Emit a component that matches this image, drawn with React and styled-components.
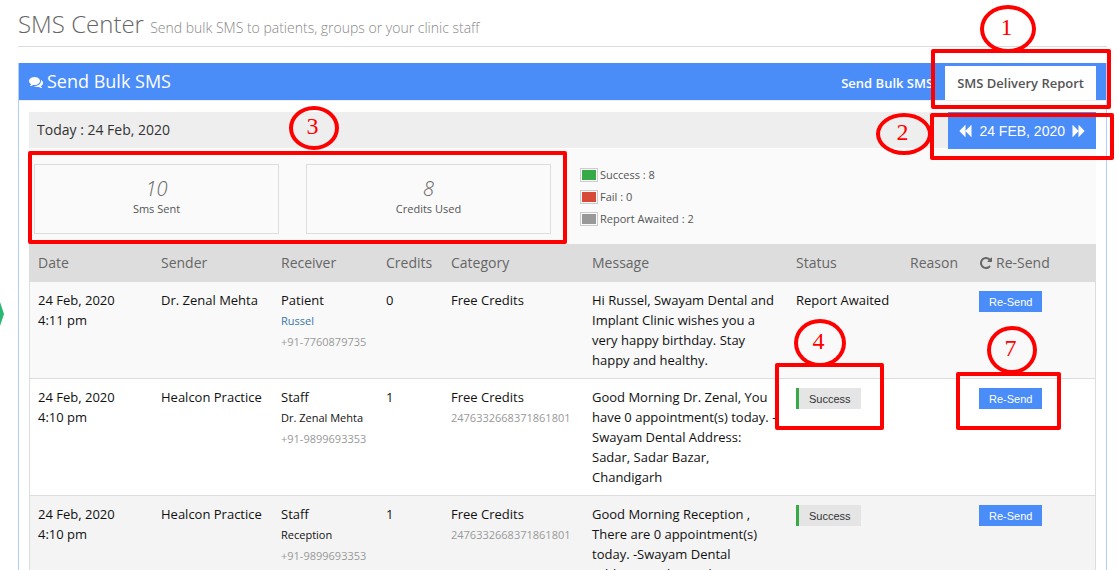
import React from "react";
import styled, { createGlobalStyle } from "styled-components";

const stats = [
  { value: 10, label: "Sms Sent" },
  { value: 8, label: "Credits Used" },
];

const legends = [
  { label: "Success", count: 8, color: "#35aa47" },
  { label: "Fail", count: 0, color: "#d84a38" },
  { label: "Report Awaited", count: 2, color: "#999999" },
];

const columnWidths = [123, 120, 105, 65, 141, 204, 114, 69];

const reports = [
  {
    id: 1,
    date: "24 Feb, 2020",
    time: "4:11 pm",
    sender: "Dr. Zenal Mehta",
    type: "Patient",
    receiver: "Russel",
    link: true,
    phone: "+91-7760879735",
    credits: 0,
    message:
      "Hi Russel, Swayam Dental and Implant Clinic wishes you a very happy birthday. Stay happy and healthy.",
    background: "#f9f9f9",
  },
  {
    id: 2,
    date: "24 Feb, 2020",
    time: "4:10 pm",
    sender: "Healcon Practice",
    type: "Staff",
    receiver: "Dr. Zenal Mehta",
    phone: "+91-9899693353",
    credits: 1,
    reference: "2476332668371861801",
    message:
      "Good Morning Dr. Zenal, You have 0 appointment(s) today. -Swayam Dental Address: Sadar, Sadar Bazar, Chandigarh",
    success: true,
    background: "#ffffff",
  },
  {
    id: 3,
    date: "24 Feb, 2020",
    time: "4:10 pm",
    sender: "Healcon Practice",
    type: "Staff",
    receiver: "Reception",
    phone: "+91-9899693353",
    credits: 1,
    reference: "2476332668371861801",
    message:
      "Good Morning Reception , There are 0 appointment(s) today. -Swayam Dental Address: Sadar, Sadar Bazar, Chandigarh",
    success: true,
    background: "#f4f4f4",
  },
];

const frames = [
  { id: 1, x: 931, y: 49, w: 180, h: 60 },
  { id: 2, x: 930, y: 113, w: 184, h: 47 },
  { id: 3, x: 28, y: 151, w: 539, h: 93 },
  { id: 4, x: 775, y: 363, w: 109, h: 67 },
  { id: 7, x: 956, y: 372, w: 105, h: 58 },
];

const steps = [
  { id: 1, x: 980, y: 5, w: 56, h: 48 },
  { id: 2, x: 876, y: 113, w: 56, h: 42 },
  { id: 3, x: 289, y: 106, w: 50, h: 44 },
  { id: 4, x: 794, y: 319, w: 52, h: 48 },
  { id: 7, x: 987, y: 326, w: 50, h: 48 },
];

const icons = {
  comments:
    "M1408 768q0 139-94 257t-256.500 186.500-353.500 68.500q-86 0-176-16-124 88-278 128-36 9-86 16h-3q-11 0-20.500-8t-11.500-21q-1-3-1-6.500t.5-6.500 2-6l2.500-5 3.500-5.500 4-5 4.500-5 4-4.500q5-6 23-25t26-29.500 22.500-29 25-38.500 20.500-44q-124-72-195-177t-71-224q0-139 94-257t256.500-186.500 353.500-68.500 353.500 68.500 256.500 186.500 94 257zm384 256q0 120-71 224.500t-195 176.500q10 24 20.500 44t25 38.500 22.500 29 26 29.500 23 25q1 1 4 4.500t4.500 5 4 5 3.500 5.500l2.500 5 2 6 .5 6.500-1 6.500q-3 14-13 22t-22 7q-50-7-86-16-154-40-278-128-90 16-176 16-271 0-472-132 58 4 88 4 161 0 309-45t264-129q125-92 192-212t67-254q0-77-23-152 129 71 204 178t75 230z",
  backward:
    "M1683 141q19-19 32-13t13 32v1472q0 26-13 32t-32-13l-710-710q-9-9-13-19v710q0 26-13 32t-32-13l-710-710q-19-19-19-45t19-45l710-710q19-19 32-13t13 32v710q4-10 13-19z",
  forward:
    "M109 1651q-19 19-32 13t-13-32v-1472q0-26 13-32t32 13l710 710q9 9 13 19v-710q0-26 13-32t32 13l710 710q19 19 19 45t-19 45l-710 710q-19 19-32 13t-13-32v-710q-4 10-13 19z",
  repeat:
    "M1664 256v448q0 26-19 45t-45 19h-448q-42 0-59-40-17-39 14-69l138-138q-148-137-349-137-104 0-198.500 40.500t-163.500 109.500-109.500 163.500-40.500 198.500 40.500 198.500 109.500 163.500 163.500 109.500 198.500 40.500q119 0 225-52t179-147q7-10 23-12 15 0 25 9l137 138q9 8 9.500 20.500t-7.500 22.500q-109 132-264 204.500t-327 72.500q-156 0-298-61t-245-164-164-245-61-298 61-298 164-245 245-164 298-61q147 0 284.500 55.500t244.500 156.500l130-129q29-31 70-14 39 17 39 59z",
};

const Icon = ({ name, size = 14 }) => (
  <svg
    width={size}
    height={size}
    viewBox="0 0 1792 1792"
    fill="currentColor"
    aria-hidden="true"
  >
    <path d={icons[name]} />
  </svg>
);

const App = () => {
  return (
    <Wrapper>
      <GlobalStyle />
      <PageTitle>
        SMS Center <small>Send bulk SMS to patients, groups or your clinic staff</small>
      </PageTitle>

      <Panel>
        <PanelHeader>
          <PanelTitle>
            <Icon name="comments" />
            Send Bulk SMS
          </PanelTitle>
          <Tabs>
            <Tab href="#send">Send Bulk SMS</Tab>
            <Tab href="#report" $active>
              SMS Delivery Report
            </Tab>
          </Tabs>
        </PanelHeader>

        <PanelBody>
          <DateBar>
            <span>Today : 24 Feb, 2020</span>
            <DatePicker>
              <button aria-label="Previous day">
                <Icon name="backward" />
              </button>
              <button>24 FEB, 2020</button>
              <button aria-label="Next day">
                <Icon name="forward" />
              </button>
            </DatePicker>
          </DateBar>

          <Summary>
            {stats.map((stat) => (
              <StatBox key={stat.label}>
                <em>{stat.value}</em>
                <span>{stat.label}</span>
              </StatBox>
            ))}
            <Legend>
              {legends.map((item) => (
                <li key={item.label}>
                  <Swatch $color={item.color} />
                  {item.label} : {item.count}
                </li>
              ))}
            </Legend>
          </Summary>

          <Table>
            <colgroup>
              {columnWidths.map((width, i) => (
                <col key={i} width={width} />
              ))}
              <col />
            </colgroup>
            <thead>
              <tr>
                <Th>Date</Th>
                <Th>Sender</Th>
                <Th>Receiver</Th>
                <Th>Credits</Th>
                <Th>Category</Th>
                <Th>Message</Th>
                <Th>Status</Th>
                <Th>Reason</Th>
                <Th>
                  <IconLabel>
                    <Icon name="repeat" />
                    Re-Send
                  </IconLabel>
                </Th>
              </tr>
            </thead>
            <tbody>
              {reports.map((report) => (
                <Row key={report.id} $background={report.background}>
                  <Td>
                    {report.date}
                    <br />
                    {report.time}
                  </Td>
                  <Td>{report.sender}</Td>
                  <Td>
                    {report.type}
                    <Small>
                      {report.link ? <a href="#patient">{report.receiver}</a> : report.receiver}
                    </Small>
                    <Small $muted>{report.phone}</Small>
                  </Td>
                  <Td>{report.credits}</Td>
                  <Td>
                    Free Credits
                    {report.reference && <Small $muted>{report.reference}</Small>}
                  </Td>
                  <Td>{report.message}</Td>
                  <Td>
                    {report.success ? <StatusButton>Success</StatusButton> : "Report Awaited"}
                  </Td>
                  <Td />
                  <Td>
                    <ResendButton>Re-Send</ResendButton>
                  </Td>
                </Row>
              ))}
            </tbody>
          </Table>
        </PanelBody>
      </Panel>

      <SideHandle viewBox="0 0 4 24">
        <path d="M0 0L4 12L0 24Z" fill="#29b774" />
      </SideHandle>

      {steps.map((step) => (
        <Step key={step.id} $x={step.x} $y={step.y} $w={step.w} $h={step.h}>
          {step.id}
        </Step>
      ))}
      {frames.map((frame) => (
        <Frame key={frame.id} $x={frame.x} $y={frame.y} $w={frame.w} $h={frame.h} />
      ))}
    </Wrapper>
  );
};

const GlobalStyle = createGlobalStyle`
  * {
    box-sizing: border-box;
  }
  body {
    margin: 0;
    background-color: #fff;
    color: #111;
    font-family: "Open Sans", "Liberation Sans", sans-serif;
    font-size: 13px;
    line-height: 20px;
  }
  svg {
    display: block;
    flex: none;
  }
`;

const Wrapper = styled.div`
  position: relative;
  height: 100vh;
  overflow: hidden;
  padding: 0 11px 0 18px;
`;

const PageTitle = styled.h1`
  margin: 0 0 16px;
  padding-top: 2px;
  border-bottom: 1px solid #ddd;
  color: #666;
  font-size: 24px;
  font-weight: 300;
  line-height: 44px;

  small {
    color: #888;
    font-size: 14px;
    line-height: 20px;
  }
`;

const Panel = styled.section`
  border: 1px solid #b4cef8;
  border-top: 0;
`;

const PanelHeader = styled.header`
  display: flex;
  justify-content: space-between;
  align-items: flex-end;
  padding: 0 10px;
  background-color: #4b8df8;
  height: 37px;
`;

const PanelTitle = styled.h2`
  display: flex;
  align-items: center;
  gap: 4px;
  margin: 0;
  color: #fff;
  font-size: 18px;
  font-weight: 400;
  line-height: 37px;
`;

const Tabs = styled.nav`
  display: flex;
`;

const Tab = styled.a`
  padding: 0 12px;
  background-color: ${({ $active }) => ($active ? "#fff" : "transparent")};
  color: ${({ $active }) => ($active ? "#555" : "#fff")};
  font-weight: 600;
  line-height: 34px;
  text-decoration: none;
`;

const PanelBody = styled.div`
  padding: 11px 10px;
  border-top: 1px solid #eee;
`;

const DateBar = styled.div`
  display: flex;
  justify-content: space-between;
  height: 36px;
  margin-bottom: 1px;
  padding-left: 8px;
  background-color: #eee;
  color: #333;
  font-size: 14px;
  line-height: 36px;
`;

const DatePicker = styled.div`
  display: flex;
  align-items: center;
  gap: 7px;
  height: 37px;
  padding: 0 10px;
  background-color: #4b8df8;

  button {
    padding: 0;
    border: 0;
    background: none;
    color: #fff;
    font-family: "Liberation Sans", Arial, sans-serif;
    font-size: 14px;
    cursor: pointer;
  }
`;

const Summary = styled.div`
  display: grid;
  grid-template-columns: minmax(0, 245px) minmax(0, 245px) 1fr;
  gap: 27px;
  padding: 15px 0 10px 5px;
  background-color: #fafafa;
`;

const StatBox = styled.div`
  display: flex;
  flex-direction: column;
  align-items: center;
  height: 70px;
  padding-top: 13px;
  border: 1px solid #ddd;
  color: #555;
  font-size: 11px;

  em {
    color: #666;
    font-size: 20px;
    font-weight: 300;
    line-height: 21px;
  }
`;

const Legend = styled.ul`
  margin: 0;
  padding: 0 0 0 2px;
  list-style: none;
  color: #555;
  font-size: 11px;
  line-height: 22px;

  li {
    display: flex;
    align-items: center;
    gap: 2px;
  }
`;

const Swatch = styled.span`
  width: 18px;
  height: 14px;
  padding: 1px;
  border: 1px solid #ccc;
  background-color: ${({ $color }) => $color};
  background-clip: content-box;
`;

const Table = styled.table`
  width: 100%;
  border: 1px solid #ddd;
  border-top: 0;
  border-spacing: 0;
  table-layout: fixed;
`;

const Th = styled.th`
  padding: 8px;
  background-color: #ddd;
  color: #666;
  font-size: 14px;
  font-weight: 400;
  line-height: 22px;
  text-align: left;
`;

const IconLabel = styled.span`
  display: flex;
  align-items: center;
  gap: 3px;
`;

const Row = styled.tr`
  background-color: ${({ $background }) => $background};
`;

const Td = styled.td`
  padding: 8px;
  border-bottom: 1px solid #ddd;
  vertical-align: top;
`;

const Small = styled.div`
  color: ${({ $muted }) => ($muted ? "#999" : "#111")};
  font-size: 11px;
  line-height: 21px;

  a {
    color: #3a76a8;
    text-decoration: none;
  }
`;

const ActionButton = styled.button`
  display: block;
  height: 21px;
  margin-top: 1px;
  padding: 0 10px;
  border: 0;
  font-family: "Liberation Sans", Arial, sans-serif;
  font-size: 11px;
  cursor: pointer;
`;

const StatusButton = styled(ActionButton)`
  border-left: 3px solid #35aa47;
  background-color: #e5e5e5;
  color: #333;
`;

const ResendButton = styled(ActionButton)`
  background-color: #4b8df8;
  color: #fff;
`;

const SideHandle = styled.svg`
  position: absolute;
  top: 302px;
  left: 0;
  width: 4px;
  height: 24px;
`;

/* guide marks drawn over the page */
const Mark = styled.div`
  position: absolute;
  top: ${({ $y }) => $y}px;
  left: ${({ $x }) => $x}px;
  width: ${({ $w }) => $w}px;
  height: ${({ $h }) => $h}px;
  border: 4px solid #f00;
  pointer-events: none;
`;

const Frame = styled(Mark)`
  border-radius: 2px;
`;

const Step = styled(Mark)`
  display: flex;
  align-items: center;
  justify-content: center;
  padding: 0 3px 4px 0;
  border-radius: 50%;
  color: #f00;
  font-family: "Liberation Serif", "Times New Roman", serif;
  font-size: 24px;
`;

export default App;
